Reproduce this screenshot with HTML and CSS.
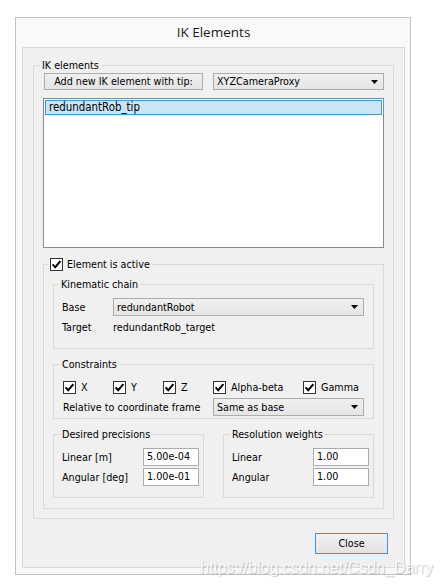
FILE: index.html
```html
<!DOCTYPE html>
<html>
<head>
<meta charset="utf-8">
<title>IK Elements</title>
<link rel="stylesheet" href="styles.css">
</head>
<body>
<div class="window">
  <div class="titlebar">IK Elements</div>
  <div class="panel">
    <fieldset class="grp grp-ik">
      <legend>IK elements</legend>
      <div class="ik-body">
        <div class="tip-row">
          <button class="btn btn-add">Add new IK element with tip:</button>
          <div class="combo combo-tip"><span>XYZCameraProxy</span><svg class="arrow" width="7" height="4" viewBox="0 0 7 4"><path d="M0 0H7L3.5 4Z"/></svg></div>
        </div>
        <div class="listbox">
          <div class="item sel">redundantRob_tip</div>
        </div>
        <fieldset class="grp grp-active">
          <legend class="cb-legend"><span class="cb"><svg width="11" height="11" viewBox="0 0 11 11"><path d="M1.6 5.4L4.2 8.2L9.4 2.2"/></svg></span>Element is active</legend>
          <div class="active-body">
            <fieldset class="grp grp-kin">
              <legend>Kinematic chain</legend>
              <div class="kin-body">
                <div class="row">
                  <span class="lbl lbl-kin">Base</span>
                  <div class="combo grow"><span>redundantRobot</span><svg class="arrow" width="7" height="4" viewBox="0 0 7 4"><path d="M0 0H7L3.5 4Z"/></svg></div>
                </div>
                <div class="row">
                  <span class="lbl lbl-kin">Target</span>
                  <span class="val">redundantRob_target</span>
                </div>
              </div>
            </fieldset>
            <fieldset class="grp grp-con">
              <legend>Constraints</legend>
              <div class="con-body">
                <div class="checks">
                  <label class="chk"><span class="cb"><svg width="11" height="11" viewBox="0 0 11 11"><path d="M1.6 5.4L4.2 8.2L9.4 2.2"/></svg></span>X</label>
                  <label class="chk"><span class="cb"><svg width="11" height="11" viewBox="0 0 11 11"><path d="M1.6 5.4L4.2 8.2L9.4 2.2"/></svg></span>Y</label>
                  <label class="chk"><span class="cb"><svg width="11" height="11" viewBox="0 0 11 11"><path d="M1.6 5.4L4.2 8.2L9.4 2.2"/></svg></span>Z</label>
                  <label class="chk"><span class="cb"><svg width="11" height="11" viewBox="0 0 11 11"><path d="M1.6 5.4L4.2 8.2L9.4 2.2"/></svg></span>Alpha-beta</label>
                  <label class="chk"><span class="cb"><svg width="11" height="11" viewBox="0 0 11 11"><path d="M1.6 5.4L4.2 8.2L9.4 2.2"/></svg></span>Gamma</label>
                </div>
                <div class="row">
                  <span class="lbl lbl-rel">Relative to coordinate frame</span>
                  <div class="combo grow"><span>Same as base</span><svg class="arrow" width="7" height="4" viewBox="0 0 7 4"><path d="M0 0H7L3.5 4Z"/></svg></div>
                </div>
              </div>
            </fieldset>
            <div class="pair">
              <fieldset class="grp grp-half">
                <legend>Desired precisions</legend>
                <div class="half-body">
                  <div class="row"><span class="lbl grow">Linear [m]</span><span class="field">5.00e-04</span></div>
                  <div class="row"><span class="lbl grow">Angular [deg]</span><span class="field">1.00e-01</span></div>
                </div>
              </fieldset>
              <fieldset class="grp grp-half">
                <legend>Resolution weights</legend>
                <div class="half-body">
                  <div class="row"><span class="lbl grow">Linear</span><span class="field">1.00</span></div>
                  <div class="row"><span class="lbl grow">Angular</span><span class="field">1.00</span></div>
                </div>
              </fieldset>
            </div>
          </div>
        </fieldset>
      </div>
    </fieldset>
    <div class="footer">
      <button class="btn btn-close">Close</button>
    </div>
  </div>
</div>
<div class="watermark">https://blog.csdn.net/Csdn_Darry</div>
</body>
</html>
```

FILE: styles.css
```css
html, body {
  margin: 0;
  padding: 0;
  background: #ffffff;
}
body {
  font-family: "DejaVu Sans Condensed", "DejaVu Sans", sans-serif;
  font-stretch: condensed;
  font-size: 10.7px;
  color: #000;
  position: relative;
  height: 588px;
}
.window {
  box-sizing: border-box;
  width: 396px;
  height: 558px;
  margin: 17px 0 0 15px;
  border: 1px solid #c2c2c2;
  background: #f9f9f9;
  padding: 0 5px 6px 6px;
  display: flex;
  flex-direction: column;
}
.titlebar {
  height: 29px;
  line-height: 29px;
  text-align: center;
  font-family: "Open Sans", "Noto Sans", sans-serif;
  font-stretch: normal;
  font-size: 13.5px;
  color: #1a1a1a;
}
.panel {
  box-sizing: border-box;
  flex: 1;
  border: 1px solid #dadada;
  background: #f0f0f0;
  padding-bottom: 13px;
  display: flex;
  flex-direction: column;
}
.grp {
  margin: 0;
  padding: 0;
  border: 1px solid #d9d9d9;
  min-width: 0;
}
.grp > legend {
  padding: 0 2px;
  margin-left: 6px;
  height: 13px;
  line-height: 13px;
}
.grp-ik {
  margin: 11px 10px 0 10px;
}
.ik-body {
  padding: 1px 9px 9px 9px;
}
.tip-row {
  display: flex;
  height: 17px;
}
.btn {
  font: inherit;
  color: #000;
  box-sizing: border-box;
  border: 1px solid #acacac;
  background: linear-gradient(#f0f0f0, #e5e5e5);
  padding: 0;
  margin: 0;
}
.btn-add {
  width: 159px;
  height: 17px;
  margin-left: 1px;
  line-height: 15px;
  white-space: nowrap;
}
.combo {
  box-sizing: border-box;
  height: 18px;
  border: 1px solid #acacac;
  background: linear-gradient(#f0f0f0, #e5e5e5);
  padding: 0 5px 0 3px;
  display: flex;
  align-items: center;
  justify-content: space-between;
}
.combo-tip {
  width: 171px;
  height: 17px;
  margin-left: 10px;
}
.arrow {
  display: block;
  fill: #000;
}
.grow {
  flex: 1;
}
.listbox {
  box-sizing: border-box;
  height: 150px;
  margin-top: 8px;
  border: 1px solid #8a8a8a;
  background: #fff;
  padding: 1px;
}
.item {
  box-sizing: border-box;
  height: 15px;
  line-height: 13px;
  padding-left: 3px;
  font-size: 11.4px;
}
.item.sel {
  background: #c9e5f6;
  border: 1px solid #3a9ae2;
}
.grp-active {
  margin-top: 10px;
}
.grp > legend.cb-legend {
  margin-left: 4px;
  display: flex;
  align-items: center;
  gap: 4px;
}
.cb {
  box-sizing: border-box;
  width: 13px;
  height: 13px;
  border: 1px solid #333;
  background: #fff;
  display: inline-block;
  flex: none;
}
.cb svg {
  display: block;
  fill: none;
  stroke: #000;
  stroke-width: 2;
}
.active-body {
  padding: 0 9px 10px 9px;
}
.grp-kin {
  margin-top: 7px;
}
.grp-kin > legend {
  margin-left: 5px;
}
.kin-body {
  padding: 7px 9px 12px 8px;
  display: flex;
  flex-direction: column;
  gap: 2px;
}
.row {
  display: flex;
  align-items: center;
  height: 18px;
}
.lbl-kin {
  width: 51px;
}
.grp-con {
  margin-top: 9px;
}
.con-body {
  padding: 7px 9px 2px 9px;
  display: flex;
  flex-direction: column;
  gap: 2px;
}
.checks {
  display: grid;
  grid-template-columns: 50px 50px 50px 90px auto;
  height: 18px;
  align-items: center;
}
.chk {
  display: flex;
  align-items: center;
  gap: 5px;
}
.lbl-rel {
  width: 150px;
}
.pair {
  display: flex;
  gap: 19px;
  margin-top: 9px;
}
.grp-half {
  width: 151px;
  box-sizing: border-box;
}
.half-body {
  padding: 7px 4px 11px 8px;
  display: flex;
  flex-direction: column;
  gap: 2px;
}
.field {
  box-sizing: border-box;
  width: 56px;
  height: 18px;
  line-height: 16px;
  border: 1px solid #abadb3;
  background: #fff;
  padding-left: 3px;
}
.footer {
  margin-top: 14px;
  display: flex;
  justify-content: flex-end;
  padding-right: 16px;
}
.btn-close {
  width: 73px;
  height: 21px;
  border-color: #3c96e2;
  background: linear-gradient(#f1f1f1, #e3e3e3);
}
.watermark {
  position: absolute;
  left: 200px;
  top: 559px;
  font-family: "Liberation Sans", Arial, sans-serif;
  font-stretch: normal;
  font-size: 16px;
  line-height: 18px;
  color: rgba(255, 255, 255, 0.92);
  text-shadow: 1px 1px 1px rgba(0, 0, 0, 0.22), -1px 0 0 rgba(0, 0, 0, 0.06);
  white-space: nowrap;
}
```
